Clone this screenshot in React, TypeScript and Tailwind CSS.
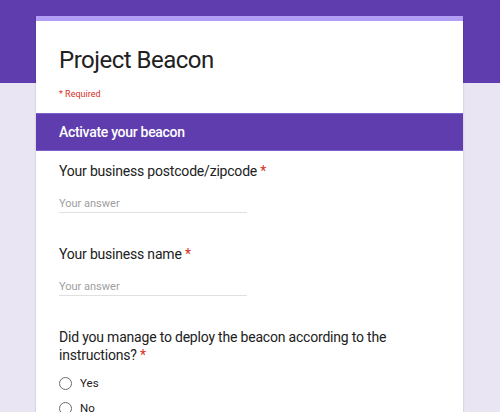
export default function App() {
    return (
        <div
            className="h-[412px] overflow-hidden bg-[linear-gradient(#5f3dae_83px,#e9e5f3_83px)] pt-[16px]"
            style={{ fontFamily: 'Roboto, "Liberation Sans", sans-serif' }}
        >
            <div className="ml-[36px] w-[427px] bg-white shadow-[0_1px_2px_rgba(0,0,0,0.2)]">
                {/* Top strip */}
                <div className="h-[5px] bg-[#b39ef5]" />

                {/* Title */}
                <div className="px-[23px] pt-[23px] pb-[13px]">
                    <h1 className="text-[24px] leading-[32px] tracking-[-0.5px] text-[#212121]">Project Beacon</h1>
                    <p className="mt-[12px] text-[9px] leading-[12px] text-[#d93025]">* Required</p>
                </div>

                {/* Section header */}
                <div className="flex h-[38px] items-center bg-[#5f3dae] px-[23px] border-y border-[#7e5fcf]">
                    <span className="text-[14px] font-medium tracking-[-0.3px] text-white">Activate your beacon</span>
                </div>

                {/* Questions */}
                <div className="px-[23px] pt-[11px]">
                    <Question label="Your business postcode/zipcode" />
                    <Question label="Your business name" />

                    <div>
                        <p className="text-[14px] leading-[18px] tracking-[-0.2px] text-[#212121]">
                            Did you manage to deploy the beacon according to the instructions?{' '}
                            <span className="text-[#d93025]">*</span>
                        </p>
                        <div className="mt-[11px] flex flex-col gap-[9px]">
                            {['Yes', 'No'].map((opt) => (
                                <label key={opt} className="flex h-[16px] items-center gap-[8px]">
                                    <span className="h-[13px] w-[13px] rounded-full border-[1.5px] border-[#6b6b6b]" />
                                    <span className="text-[11.5px] leading-[14px] text-[#212121]">{opt}</span>
                                </label>
                            ))}
                        </div>
                    </div>
                </div>
            </div>
        </div>
    )
}

function Question({ label }: { label: string }) {
    return (
        <div className="pb-[32px]">
            <p className="text-[14px] leading-[18px] tracking-[-0.2px] text-[#212121]">
                {label} <span className="text-[#d93025]">*</span>
            </p>
            <div className="mt-[17px] w-[188px] border-b border-[#e0e0e0] pb-[2px] text-[11px] leading-[13px] text-[#9e9e9e]">
                Your answer
            </div>
        </div>
    )
}
